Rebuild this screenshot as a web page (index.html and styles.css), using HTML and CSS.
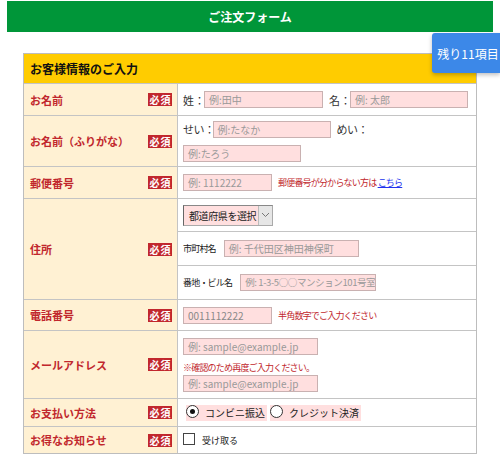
FILE: index.html
```html
<!DOCTYPE html>
<html lang="ja">
<head>
<meta charset="utf-8">
<link rel="stylesheet" href="styles.css">
</head>
<body>
<header class="topbar">ご注文フォーム</header>
<div class="remain">残り11項目</div>
<main class="wrap">
<div class="form">
  <div class="sec">お客様情報のご入力</div>

  <div class="lab h1"><span>お名前</span><span class="req">必須</span></div>
  <div class="val h1"><span class="k">姓：</span><span class="inp w118">例:田中</span><span class="k k2">名：</span><span class="inp w117">例: 太郎</span></div>

  <div class="lab h2"><span>お名前（ふりがな）</span><span class="req">必須</span></div>
  <div class="val h2 col"><div class="line"><span class="k k3">せい：</span><span class="inp w117">例:たなか</span><span class="k k2 k3">めい：</span></div><div class="line l2"><span class="inp w117">例:たろう</span></div></div>

  <div class="lab h3"><span>郵便番号</span><span class="req">必須</span></div>
  <div class="val h3"><span class="inp w88">例: 1112222</span><span class="note">郵便番号が分からない方は <a href="#" class="link">こちら</a></span></div>

  <div class="lab h4"><span>住所</span><span class="req">必須</span></div>
  <div class="val h4 sub">
    <div class="subrow s1"><span class="sel"><span class="seltxt">都道府県を選択</span><span class="selbtn"><svg width="9" height="6" viewBox="0 0 9 6"><path d="M1 1l3.5 3.5L8 1" fill="none" stroke="#777" stroke-width="1"/></svg></span></span></div>
    <div class="subrow s2"><span class="sk">市町村名</span><span class="inp w134">例: 千代田区神田神保町</span></div>
    <div class="subrow s3"><span class="sk">番地・ビル名</span><span class="inp w135 tight">例: 1-3-5○○マンション101号室</span></div>
  </div>

  <div class="lab h5"><span>電話番号</span><span class="req">必須</span></div>
  <div class="val h5"><span class="inp w88 filled">0011112222</span><span class="note">半角数字でご入力ください</span></div>

  <div class="lab h6"><span>メールアドレス</span><span class="req">必須</span></div>
  <div class="val h6 mail"><span class="inp w134">例: sample@example.jp</span><span class="note n0">※確認のため再度ご入力ください。</span><span class="inp w134">例: sample@example.jp</span></div>

  <div class="lab h7"><span>お支払い方法</span><span class="req">必須</span></div>
  <div class="val h7 radios"><span class="opt"><span class="radio on"></span>コンビニ振込</span><span class="opt"><span class="radio"></span>クレジット決済</span></div>

  <div class="lab h8 last"><span>お得なお知らせ</span><span class="req">必須</span></div>
  <div class="val h8 last"><span class="check"></span><span class="ck">受け取る</span></div>
</div>
</main>
</body>
</html>
```
FILE: styles.css
```css
* { box-sizing: border-box; }
body {
  margin: 0;
  background: #fff;
  font-family: "Noto Sans CJK JP", "Noto Sans", sans-serif;
  color: #333;
}
.topbar {
  margin: 1px 7px 0;
  height: 31px;
  background: #009639;
  color: #fff;
  font-weight: bold;
  font-size: 12px;
  display: flex;
  align-items: center;
  justify-content: center;
}
.remain {
  position: absolute;
  top: 33px;
  right: 0;
  width: 68px;
  height: 40px;
  background: #3c88e8;
  color: #fff;
  font-size: 12px;
  display: flex;
  align-items: center;
  justify-content: center;
  padding-left: 4px;
  box-shadow: 0 2px 4px rgba(0,0,0,.25);
  border-radius: 3px 0 0 3px;
}
.wrap {
  padding: 21px 0 0 23px;
}
.form {
  width: 454px;
  display: grid;
  grid-template-columns: 154px 298px;
  border: 1px solid #bdbdbd;
}
.sec {
  grid-column: 1 / -1;
  height: 30px;
  background: #ffcc00;
  border-bottom: 1px solid #c4c4c4;
  padding-left: 6px;
  font-size: 12px;
  font-weight: bold;
  color: #111;
  display: flex;
  align-items: center;
}
.lab {
  background: #fff1d3;
  border-right: 1px solid #c4c4c4;
  border-bottom: 1px solid #c4c4c4;
  display: flex;
  align-items: center;
  justify-content: space-between;
  padding: 0 5px 0 6px;
  color: #c1272d;
  font-weight: bold;
  font-size: 11px;
}
.val {
  border-bottom: 1px solid #c4c4c4;
  padding-left: 5px;
  font-size: 11px;
  color: #333;
  display: flex;
  align-items: center;
  white-space: nowrap;
}
.last { border-bottom: 0; }
.h1 { height: 32px; }
.h2 { height: 51px; }
.h3 { height: 32px; }
.h4 { height: 101px; }
.h5 { height: 31px; }
.h6 { height: 68px; }
.h7 { height: 28px; }
.h8 { height: 26px; }
.req {
  background: #c1272d;
  color: #fff;
  font-size: 10px;
  width: 24px;
  height: 13px;
  line-height: 13px;
  text-align: center;
  letter-spacing: 1px;
  padding-left: 1px;
  font-weight: bold;
}
.col {
  flex-direction: column;
  align-items: flex-start;
  justify-content: center;
}
.line {
  display: flex;
  align-items: center;
}
.l2 { margin-top: 7px; }
.k { margin-right: -1px; }
.k2 { margin-left: 6px; }
.k3 { letter-spacing: -0.5px; margin-right: -2px; }
.inp {
  display: inline-block;
  flex: none;
  height: 17px;
  line-height: 15px;
  background: #ffdfdf;
  border: 1px solid #c9b1b1;
  color: #999;
  font-size: 10px;
  padding-left: 4px;
  white-space: nowrap;
  overflow: hidden;
}
.inp.tight { font-size: 9.5px; letter-spacing: -0.4px; }
.inp.filled { color: #888; }
.w88 { width: 89px; }
.w117 { width: 118px; }
.w118 { width: 119px; }
.w134 { width: 135px; }
.w135 { width: 136px; }
.note {
  color: #c1272d;
  font-size: 9px;
  letter-spacing: -0.8px;
  margin-left: 6px;
}
.n0 { margin: 6px 0 1px; }
.link { color: #2233ee; }
.sub {
  padding: 0;
  flex-direction: column;
  align-items: stretch;
}
.subrow {
  display: flex;
  align-items: center;
  padding-left: 5px;
}
.s1 { height: 33px; border-bottom: 1px solid #c4c4c4; }
.s2 { height: 34px; border-bottom: 1px solid #c4c4c4; }
.s3 { height: 33px; }
.sk { font-size: 9px; letter-spacing: -0.8px; margin-right: 8px; color: #222; }
.sel {
  display: flex;
  height: 21px;
  border: 1px solid #aaa;
  border-left-color: #666;
  border-top-color: #888;
}
.seltxt {
  background: #ffdfdf;
  padding: 0 2px 0 5px;
  font-size: 10px;
  letter-spacing: -0.4px;
  line-height: 19px;
  color: #222;
}
.selbtn {
  width: 14px;
  background: #e6e6e6;
  border-left: 1px solid #bbb;
  display: flex;
  align-items: center;
  justify-content: center;
}
.mail {
  flex-direction: column;
  align-items: flex-start;
  justify-content: center;
}
.radios { padding-left: 8px; }
.opt {
  display: inline-flex;
  align-items: center;
  background: #ffdfdf;
  height: 16px;
  padding-right: 2px;
  margin-right: 3px;
  font-size: 10px;
  color: #222;
}
.radio {
  width: 13px;
  height: 13px;
  border: 1px solid #333;
  border-radius: 50%;
  background: #fff;
  margin-right: 6px;
  position: relative;
  margin-top: -3px;
}
.radio.on::after {
  content: "";
  position: absolute;
  left: 3px;
  top: 3px;
  width: 5px;
  height: 5px;
  border-radius: 50%;
  background: #111;
}
.check {
  width: 12px;
  height: 12px;
  border: 1px solid #444;
  background: #fff;
  margin: -3px 7px 0 0;
}
.ck { font-size: 9px; color: #222; }
```
